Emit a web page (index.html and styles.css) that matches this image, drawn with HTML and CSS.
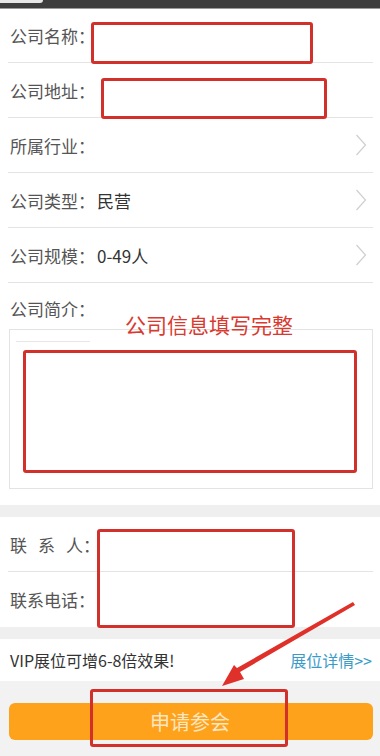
FILE: index.html
```
<!DOCTYPE html>
<html lang="zh">
<head>
<meta charset="utf-8">
<title>申请参会</title>
<link rel="stylesheet" href="styles.css">
</head>
<body>
<div class="page">
  <div class="topbar"><span class="tab"></span></div>

  <div class="list">
    <div class="row"><span class="label">公司名称：</span></div>
    <div class="row"><span class="label">公司地址：</span></div>
    <div class="row"><span class="label">所属行业：</span><span class="value"></span><svg class="chev" viewBox="0 0 12 22"><polyline points="1.5,1 10.5,11 1.5,21"/></svg></div>
    <div class="row"><span class="label">公司类型：</span><span class="value">民营</span><svg class="chev" viewBox="0 0 12 22"><polyline points="1.5,1 10.5,11 1.5,21"/></svg></div>
    <div class="row"><span class="label">公司规模：</span><span class="value">0-49人</span><svg class="chev" viewBox="0 0 12 22"><polyline points="1.5,1 10.5,11 1.5,21"/></svg></div>
  </div>

  <div class="intro">
    <div class="label intro-label">公司简介：</div>
    <div class="textbox"><span class="textline"></span></div>
  </div>

  <div class="band"></div>

  <div class="list contact">
    <div class="row"><span class="label"><span class="spread">联系</span>人：</span></div>
    <div class="row"><span class="label">联系电话：</span></div>
  </div>

  <div class="band"></div>

  <div class="vip">
    <span class="vip-text">VIP展位可增6-8倍效果!</span>
    <span class="vip-link">展位详情&gt;&gt;</span>
  </div>

  <div class="footer">
    <div class="btn">申请参会</div>
  </div>

  <div class="mark box1"></div>
  <div class="mark box2"></div>
  <div class="mark box3"></div>
  <div class="mark box4"></div>
  <div class="mark box5"></div>
  <div class="note">公司信息填写完整</div>
  <svg class="arrow" viewBox="0 0 380 756">
    <polygon points="353,602 355,605 240,672 244,679 222,686 234,665 237,668"/>
  </svg>
</div>
</body>
</html>
```

FILE: styles.css
```
* { box-sizing: border-box; }
html, body { margin: 0; padding: 0; }
body {
  background: #f2f2f2;
  font-family: "Noto Sans CJK SC", "Noto Sans", sans-serif;
}
.page {
  position: relative;
  width: 380px;
  height: 756px;
  overflow: hidden;
  background: #ffffff;
  display: flex;
  flex-direction: column;
}
.topbar {
  height: 9px;
  background: #3d3d3d;
  border-bottom: 1px solid #9a9a9a;
  flex: none;
}
.tab {
  display: block;
  width: 43px;
  height: 3px;
  background: #e6e6e6;
  border-bottom-right-radius: 4px;
}
.list {
  padding: 0 7px 0 8px;
  background: #fff;
}
.row {
  height: 55px;
  border-bottom: 1px solid #e4e4e4;
  display: flex;
  align-items: center;
  padding-left: 2px;
  padding-right: 6px;
}
.list .row:first-child { height: 54px; }
.label {
  font-size: 17px;
  color: #555555;
  white-space: nowrap;
}
.spread { letter-spacing: 11px; }
.value {
  font-size: 17px;
  color: #333333;
  margin-left: 2px;
  flex: 1;
}
.chev {
  width: 12px;
  height: 22px;
  margin-left: auto;
}
.chev polyline {
  fill: none;
  stroke: #cfcfcf;
  stroke-width: 1.2;
}
.intro {
  padding: 16px 7px 16px 9px;
  background: #fff;
}
.intro-label {
  line-height: 20px;
  padding-left: 1px;
}
.textbox {
  margin-top: 10px;
  height: 160px;
  border: 1px solid #e3e3e3;
  padding: 11px 0 0 6px;
}
.textline {
  display: block;
  width: 74px;
  height: 1px;
  background: #e6e6e6;
}
.band {
  height: 12px;
  background: #efefef;
  flex: none;
}
.contact .row:last-child { border-bottom: none; height: 55px; }
.contact .row:first-child { height: 55px; }
.vip {
  height: 42px;
  background: #fff;
  display: flex;
  align-items: center;
  justify-content: space-between;
  padding: 0 8px 0 10px;
}
.vip-text { font-size: 16px; color: #333; }
.vip-link { font-size: 16px; color: #3a9bc9; }
.footer {
  flex: 1;
  background: #f2f2f2;
  padding: 22px 7px 0 9px;
}
.btn {
  height: 37px;
  border-radius: 6px;
  background: #fda21a;
  color: #fde6c2;
  font-size: 20px;
  display: flex;
  align-items: center;
  justify-content: center;
  padding-right: 2px;
}
.mark {
  position: absolute;
  border: 3px solid #d2302b;
  border-radius: 3px;
}
.box1 { left: 91px; top: 22px; width: 222px; height: 42px; }
.box2 { left: 101px; top: 78px; width: 226px; height: 41px; }
.box3 { left: 23px; top: 350px; width: 334px; height: 123px; }
.box4 { left: 97px; top: 529px; width: 198px; height: 99px; }
.box5 { left: 90px; top: 689px; width: 198px; height: 58px; }
.note {
  position: absolute;
  left: 125px;
  top: 311px;
  font-size: 21px;
  line-height: 26px;
  color: #d93a30;
  white-space: nowrap;
}
.arrow {
  position: absolute;
  left: 0;
  top: 0;
  width: 380px;
  height: 756px;
  pointer-events: none;
}
.arrow polygon { fill: #e0302a; }
```
